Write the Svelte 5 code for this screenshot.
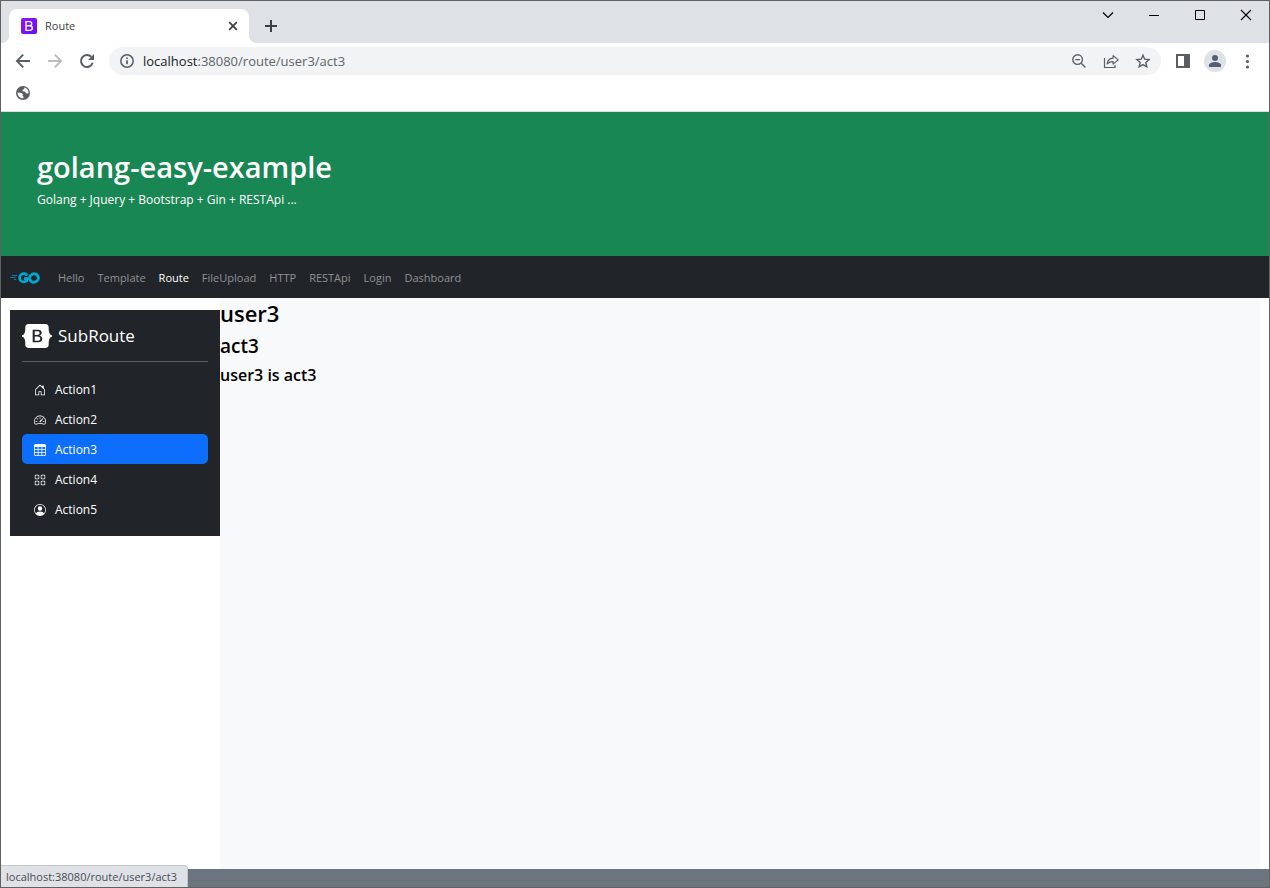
<script>
  const navItems = ['Hello', 'Template', 'Route', 'FileUpload', 'HTTP', 'RESTApi', 'Login', 'Dashboard'];
  const actions = [
    {
      label: 'Action1',
      paths: [
        'M8.354 1.146a.5.5 0 0 0-.708 0l-6 6A.5.5 0 0 0 1.5 7.5v7a.5.5 0 0 0 .5.5h4.5a.5.5 0 0 0 .5-.5v-4h2v4a.5.5 0 0 0 .5.5H14a.5.5 0 0 0 .5-.5v-7a.5.5 0 0 0-.146-.354L13 5.793V2.5a.5.5 0 0 0-.5-.5h-1a.5.5 0 0 0-.5.5v1.293L8.354 1.146zM2.5 14V7.707l5.5-5.5 5.5 5.5V14H10v-4a.5.5 0 0 0-.5-.5h-3a.5.5 0 0 0-.5.5v4H2.5z'
      ]
    },
    {
      label: 'Action2',
      paths: [
        'M8 4a.5.5 0 0 1 .5.5V6a.5.5 0 0 1-1 0V4.5A.5.5 0 0 1 8 4zM3.732 5.732a.5.5 0 0 1 .707 0l.915.914a.5.5 0 1 1-.708.708l-.914-.915a.5.5 0 0 1 0-.707zM2 10a.5.5 0 0 1 .5-.5h1.586a.5.5 0 0 1 0 1H2.5A.5.5 0 0 1 2 10zm9.5 0a.5.5 0 0 1 .5-.5h1.5a.5.5 0 0 1 0 1H12a.5.5 0 0 1-.5-.5zm.754-4.246a.389.389 0 0 0-.527-.02L7.547 9.31a.91.91 0 1 0 1.302 1.258l3.434-4.297a.389.389 0 0 0-.029-.518z',
        'M0 10a8 8 0 1 1 15.547 2.661c-.442 1.253-1.845 1.602-2.932 1.25C11.309 13.488 9.475 13 8 13c-1.474 0-3.31.488-4.615.911-1.087.352-2.49.003-2.932-1.25A7.988 7.988 0 0 1 0 10zm8-7a7 7 0 0 0-6.603 9.329c.203.575.923.876 1.68.63C4.397 12.533 6.358 12 8 12s3.604.532 4.923.96c.757.245 1.477-.056 1.68-.631A7 7 0 0 0 8 3z'
      ]
    },
    {
      label: 'Action3',
      paths: [
        'M0 2a2 2 0 0 1 2-2h12a2 2 0 0 1 2 2v12a2 2 0 0 1-2 2H2a2 2 0 0 1-2-2V2zm15 2h-4v3h4V4zm0 4h-4v3h4V8zm0 4h-4v3h3a1 1 0 0 0 1-1v-2zm-5 3v-3H6v3h4zm-5 0v-3H1v2a1 1 0 0 0 1 1h3zm-4-4h4V8H1v3zm0-4h4V4H1v3zm5-3v3h4V4H6zm4 4H6v3h4V8z'
      ]
    },
    {
      label: 'Action4',
      paths: [
        'M1 2.5A1.5 1.5 0 0 1 2.5 1h3A1.5 1.5 0 0 1 7 2.5v3A1.5 1.5 0 0 1 5.5 7h-3A1.5 1.5 0 0 1 1 5.5v-3zM2.5 2a.5.5 0 0 0-.5.5v3a.5.5 0 0 0 .5.5h3a.5.5 0 0 0 .5-.5v-3a.5.5 0 0 0-.5-.5h-3zm6.5.5A1.5 1.5 0 0 1 10.5 1h3A1.5 1.5 0 0 1 15 2.5v3A1.5 1.5 0 0 1 13.5 7h-3A1.5 1.5 0 0 1 9 5.5v-3zm1.5-.5a.5.5 0 0 0-.5.5v3a.5.5 0 0 0 .5.5h3a.5.5 0 0 0 .5-.5v-3a.5.5 0 0 0-.5-.5h-3zM1 10.5A1.5 1.5 0 0 1 2.5 9h3A1.5 1.5 0 0 1 7 10.5v3A1.5 1.5 0 0 1 5.5 15h-3A1.5 1.5 0 0 1 1 13.5v-3zm1.5-.5a.5.5 0 0 0-.5.5v3a.5.5 0 0 0 .5.5h3a.5.5 0 0 0 .5-.5v-3a.5.5 0 0 0-.5-.5h-3zm6.5.5A1.5 1.5 0 0 1 10.5 9h3a1.5 1.5 0 0 1 1.5 1.5v3a1.5 1.5 0 0 1-1.5 1.5h-3A1.5 1.5 0 0 1 9 13.5v-3zm1.5-.5a.5.5 0 0 0-.5.5v3a.5.5 0 0 0 .5.5h3a.5.5 0 0 0 .5-.5v-3a.5.5 0 0 0-.5-.5h-3z'
      ]
    },
    {
      label: 'Action5',
      paths: [
        'M11 6a3 3 0 1 1-6 0 3 3 0 0 1 6 0z',
        'M0 8a8 8 0 1 1 16 0A8 8 0 0 1 0 8zm8-7a7 7 0 0 0-5.468 11.37C3.242 11.226 4.805 10 8 10s4.757 1.225 5.468 2.37A7 7 0 0 0 8 1z'
      ]
    }
  ];
  let activeNav = $state('Route');
  let activeAction = $state('Action3');
</script>

<div class="window">
  <div class="tabstrip">
    <div class="tab">
      <svg class="favicon" viewBox="0 0 16 16" width="16" height="16" aria-hidden="true">
        <defs>
          <linearGradient id="fav" x1="0" y1="0" x2="1" y2="1">
            <stop offset="0" stop-color="#9013fe" /><stop offset="1" stop-color="#6610f2" />
          </linearGradient>
        </defs>
        <rect width="16" height="16" rx="2" fill="url(#fav)" />
        <path d="M5 3.600h3.600a2.100 2.100 0 0 1 0 4.200H5zM5 7.800h4a2.300 2.300 0 0 1 0 4.600H5z" fill="none" stroke="#fff" stroke-width="1.400" />
      </svg>
      <span class="tab-title">Route</span>
      <button aria-label="Close tab">
        <svg viewBox="0 0 16 16" width="16" height="16"><path d="M4.200 4.200l7.600 7.600M11.800 4.200l-7.600 7.600" stroke="#3c4043" stroke-width="1.700" /></svg>
      </button>
    </div>
    <button class="new-tab" aria-label="New tab">
      <svg viewBox="0 0 16 16" width="16" height="16"><path d="M8 2v12M2 8h12" stroke="#3c4043" stroke-width="2" /></svg>
    </button>
    <div class="win-controls">
      <button aria-label="Search tabs"><svg viewBox="0 0 12 12" width="12" height="12"><path d="M1 3.500l5 5 5-5" fill="none" stroke="#000" stroke-width="1.200" /></svg></button>
      <button aria-label="Minimize"><svg viewBox="0 0 12 12" width="12" height="12"><path d="M1 6.500h10" stroke="#000" /></svg></button>
      <button aria-label="Maximize"><svg viewBox="0 0 12 12" width="12" height="12"><path d="M1.500 1.500h9v9h-9z" fill="none" stroke="#000" /></svg></button>
      <button aria-label="Close"><svg viewBox="0 0 12 12" width="12" height="12"><path d="M1 1l10 10M11 1L1 11" stroke="#000" stroke-width="1.100" /></svg></button>
    </div>
  </div>

  <div class="toolbar">
    <button aria-label="Back"><svg viewBox="0 0 16 16" width="16" height="16"><path d="M15 8H2.500M8.200 1.700L1.900 8l6.300 6.300" fill="none" stroke="#5a5e63" stroke-width="1.900" /></svg></button>
    <button aria-label="Forward" disabled><svg viewBox="0 0 16 16" width="16" height="16"><path d="M1 8h12.500M7.800 1.700L14.100 8l-6.300 6.300" fill="none" stroke="#babcbe" stroke-width="1.900" /></svg></button>
    <button aria-label="Reload"><svg viewBox="0 0 16 16" width="16" height="16"><path d="M13.700 9.800A6 6 0 1 1 12.400 3.900" fill="none" stroke="#5a5e63" stroke-width="2" /><path d="M15 1v6H9z" fill="#5a5e63" /></svg></button>
    <div class="omnibox">
      <svg viewBox="0 0 16 16" width="16" height="16" aria-hidden="true"><circle cx="8" cy="8" r="6.200" fill="none" stroke="#5a5e63" stroke-width="1.500" /><path d="M8 7.200v4M8 4.400v1.700" stroke="#5a5e63" stroke-width="1.700" /></svg>
      <a class="url" href="#top"><span>localhost</span>:38080/route/user3/act3</a>
      <button aria-label="Zoom out"><svg viewBox="0 0 16 16" width="16" height="16"><circle cx="6.600" cy="6.600" r="4.800" fill="none" stroke="#5a5e63" stroke-width="1.400" /><path d="M10.200 10.200l4.200 4.200M4.300 6.600h4.600" stroke="#5a5e63" stroke-width="1.400" /></svg></button>
      <button aria-label="Share"><svg viewBox="0 0 16 16" width="16" height="16"><path d="M1.500 5v9.500h10.500v-2.500M4.200 10.800c.4-3.700 2.200-5.400 5.900-5.600V2.600L15.200 6.900l-5.100 4.200V8.600c-2.500 0-4.300.6-5.900 2.200z" fill="none" stroke="#5a5e63" stroke-width="1.200" stroke-linejoin="round" /></svg></button>
      <button aria-label="Bookmark"><svg viewBox="0 0 16 16" width="16" height="16"><path d="M8 2.200l1.700 4 4.400.4-3.300 2.900 1 4.400L8 11.600l-3.800 2.300 1-4.400-3.300-2.900 4.400-.4z" fill="none" stroke="#5a5e63" stroke-width="1.400" /></svg></button>
    </div>
    <button aria-label="Side panel"><svg viewBox="0 0 16 16" width="16" height="16"><path d="M1 1h14v14H1zM3 3v10h6V3z" fill="#5a5e63" fill-rule="evenodd" /></svg></button>
    <button class="profile" aria-label="Profile"><svg viewBox="0 0 22 22" width="22" height="22"><circle cx="11" cy="11" r="11" fill="#dee1e6" /><circle cx="11" cy="8" r="3" fill="#535e75" /><path d="M5 17v-2c0-2 3.800-3 6-3s6 1 6 3v2z" fill="#535e75" /></svg></button>
    <button aria-label="Menu"><svg viewBox="0 0 16 16" width="16" height="16" fill="#5a5e63"><circle cx="8.500" cy="3" r="1.600" /><circle cx="8.500" cy="8.500" r="1.600" /><circle cx="8.500" cy="14" r="1.600" /></svg></button>
  </div>

  <div class="bookmarks">
    <button aria-label="Bookmark site"><svg viewBox="0 0 16 16" width="16" height="16"><circle cx="8" cy="8" r="7" fill="#5a5e63" /><path d="M2.600 7.500l3.900.4 1.400 1.300-.5 1.500 1 .8v1.800C4.900 13.500 2.500 11 2.600 7.500zM9.500 2.600l-.3 1.500-1.700.8.200 1.400 2.700.4.500 1.600 2.500.2c.5-3-1.400-5.200-3.900-5.900z" fill="#fff" /></svg></button>
  </div>

  <header id="top">
    <h1>golang-easy-example</h1>
    <p>Golang + Jquery + Bootstrap + Gin + RESTApi ...</p>
  </header>

  <nav class="navbar">
    <a class="brand" href="#top" aria-label="Go">
      <svg viewBox="0 0 30 14" width="30" height="14" fill="none" stroke="#00a7d0">
        <path d="M2 4.500h5M0 6.500h5.500M4 8.500h2" stroke-width="0.700" />
        <path d="M17.300 4.400A4.200 4.200 0 1 0 16.900 9.600L17.700 7.600H14" stroke-width="2.700" />
        <ellipse cx="24" cy="7" rx="4.400" ry="4.200" transform="rotate(-20 24 7)" stroke-width="2.900" />
      </svg>
    </a>
    {#each navItems as item}
      <a href="#top" class:active={item === activeNav} onclick={() => (activeNav = item)}>{item}</a>
    {/each}
  </nav>

  <main>
    <aside>
      <a class="side-brand" href="#top">
        <svg viewBox="0 0 118 94" width="30" height="24" fill="#fff" aria-hidden="true">
          <path fill-rule="evenodd" d="M24.509 0c-6.733 0-11.715 5.893-11.492 12.284.214 6.140-.064 14.092-2.066 20.577C8.943 39.365 5.547 43.485 0 44.014v5.972c5.547.529 8.943 4.649 10.951 11.153 2.002 6.485 2.280 14.437 2.066 20.577C12.794 88.106 17.776 94 24.510 94H93.500c6.733 0 11.714-5.893 11.491-12.284-.214-6.140.064-14.092 2.066-20.577 2.009-6.504 5.396-10.624 10.943-11.153v-5.972c-5.547-.529-8.934-4.649-10.943-11.153-2.002-6.484-2.280-14.437-2.066-20.577C105.214 5.894 100.233 0 93.500 0H24.508zM80 57.863C80 66.663 73.436 72 62.543 72H44a2 2 0 01-2-2V24a2 2 0 012-2h18.437c9.083 0 15.044 4.920 15.044 12.474 0 5.302-4.010 10.049-9.119 10.880v.277C75.317 46.394 80 51.210 80 57.863zM60.521 28.340H49.948v14.934h8.905c6.884 0 10.680-2.772 10.680-7.727 0-4.643-3.264-7.207-9.012-7.207zM49.948 49.200v16.458H60.910c7.167 0 10.964-2.876 10.964-8.281 0-5.406-3.903-8.178-11.425-8.178H49.948z" />
        </svg>
        <span>SubRoute</span>
      </a>
      <hr />
      <ul>
        {#each actions as action}
          <li>
            <a href="#top" class:active={action.label === activeAction} onclick={() => (activeAction = action.label)}>
              <svg viewBox="0 0 16 16" width="12" height="12" fill="currentColor" aria-hidden="true">
                {#each action.paths as d}<path fill-rule="evenodd" {d} />{/each}
              </svg>
              {action.label}
            </a>
          </li>
        {/each}
      </ul>
    </aside>
    <section>
      <h2>user3</h2>
      <h3>act3</h3>
      <h4>user3 is act3</h4>
    </section>
  </main>

  <footer></footer>
  <div class="status">localhost:38080/route/user3/act3</div>
</div>

<style>
  :global(body) {
    font-family: 'Open Sans', 'Noto Sans', sans-serif;
    font-size: 12px;
    line-height: 18px;
    color: #000;
  }
  .window {
    box-sizing: border-box;
    min-height: 100vh;
    display: flex;
    flex-direction: column;
    border: 1px solid #5f6163;
    background: #fff;
    position: relative;
  }
  a {
    color: inherit;
    text-decoration: none;
  }
  button {
    border: 0;
    padding: 0;
    background: none;
    display: flex;
    align-items: center;
    justify-content: center;
  }
  svg {
    display: block;
    flex: none;
  }
  h1, h2, h3, h4, p, ul {
    margin: 0;
  }
  .tabstrip {
    display: flex;
    align-items: flex-end;
    height: 42px;
    padding-left: 8px;
    background: #dee1e6;
  }
  .tab {
    position: relative;
    display: flex;
    align-items: center;
    gap: 8px;
    box-sizing: border-box;
    width: 240px;
    height: 34px;
    padding: 0 8px 0 12px;
    border-radius: 8px 8px 0 0;
    background: #fff;
  }
  .tab::before,
  .tab::after {
    content: '';
    position: absolute;
    bottom: 0;
    width: 8px;
    height: 8px;
  }
  .tab::before {
    left: -8px;
    background: radial-gradient(circle at 0 0, transparent 8px, #fff 8px);
  }
  .tab::after {
    right: -8px;
    background: radial-gradient(circle at 100% 0, transparent 8px, #fff 8px);
  }
  .tab-title {
    flex: 1;
    font-size: 11px;
    color: #3c4043;
  }
  .new-tab {
    width: 28px;
    height: 34px;
    margin-left: 8px;
  }
  .win-controls {
    display: flex;
    align-self: flex-start;
    margin-left: auto;
  }
  .win-controls button {
    width: 46px;
    height: 28px;
  }
  .toolbar {
    display: flex;
    align-items: center;
    gap: 16px;
    height: 36px;
    padding: 0 14px;
  }
  .omnibox {
    flex: 1;
    display: flex;
    align-items: center;
    gap: 16px;
    height: 28px;
    margin: 0 -2px;
    padding: 0 10px;
    border-radius: 14px;
    background: #f1f3f4;
  }
  .url {
    flex: 1;
    margin-left: -8px;
    font-size: 13px;
    color: #5f6368;
  }
  .url span {
    color: #202124;
  }
  .profile {
    margin: 0 -3px;
  }
  .bookmarks {
    display: flex;
    align-items: center;
    height: 28px;
    padding: 0 14px 4px;
    border-bottom: 1px solid #dadce0;
  }
  header {
    padding: 37px 36px 47px;
    background: #198754;
    color: #fff;
  }
  h1 {
    margin-bottom: 6px;
    font-size: 29px;
    line-height: 36px;
    font-weight: 600;
  }
  .navbar {
    display: flex;
    align-items: center;
    gap: 13px;
    box-sizing: border-box;
    height: 42px;
    padding: 2px 9px 0;
    background: #212529;
    color: #909294;
    font-size: 11px;
  }
  .navbar .brand {
    margin-right: 5px;
  }
  .navbar .active {
    color: #fff;
  }
  main {
    flex: 1;
    display: flex;
    align-items: stretch;
    padding: 0 9px;
  }
  aside {
    box-sizing: border-box;
    width: 210px;
    flex: none;
    align-self: flex-start;
    margin-top: 12px;
    padding: 12px;
    background: #212529;
    color: #fff;
  }
  .side-brand {
    display: flex;
    align-items: center;
    gap: 6px;
    height: 27px;
    font-size: 17px;
  }
  hr {
    height: 1px;
    margin: 12px 0;
    border: 0;
    background: #5b5e61;
  }
  ul {
    padding: 0;
    list-style: none;
  }
  li a {
    display: flex;
    align-items: center;
    gap: 9px;
    box-sizing: border-box;
    height: 30px;
    padding: 2px 12px 0;
    border-radius: 5px;
  }
  li .active {
    background: #0d6efd;
  }
  section {
    flex: 1;
    background: #f8f9fa;
  }
  section h2, section h3, section h4 {
    margin-bottom: 6px;
    font-weight: 600;
  }
  h2 {
    font-size: 22px;
    line-height: 30px;
  }
  h3 {
    font-size: 19px;
    line-height: 25px;
  }
  h4 {
    font-size: 16px;
    line-height: 20px;
  }
  footer {
    height: 18px;
    background: #6c757d;
  }
  .status {
    position: absolute;
    left: 0;
    bottom: 0;
    padding: 2px 10px 1px 5px;
    border: solid #c4c7cb;
    border-width: 1px 1px 0 0;
    border-radius: 0 4px 0 0;
    background: #dee1e6;
    color: #4a4d51;
    font-size: 11px;
  }
</style>
